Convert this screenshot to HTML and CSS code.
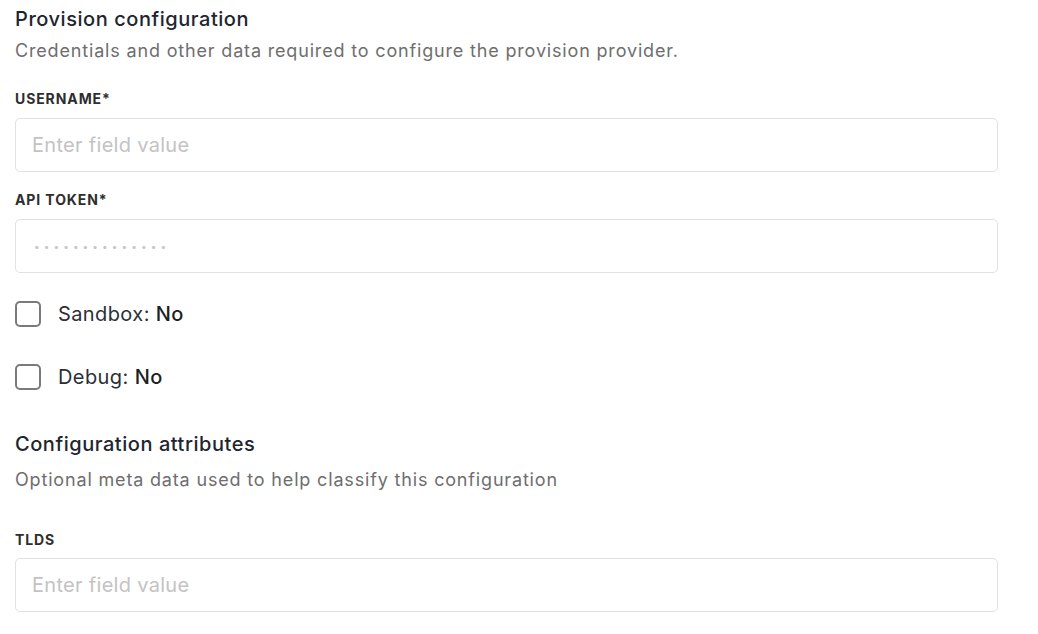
FILE: index.html
```html
<!DOCTYPE html>
<html lang="en">
<head>
<meta charset="utf-8">
<title>Provision configuration</title>
<link rel="stylesheet" href="styles.css">
</head>
<body>
<main class="page">
  <section class="section">
    <h2 class="section-title">Provision configuration</h2>
    <p class="section-desc">Credentials and other data required to configure the provision provider.</p>

    <div class="field field-first">
      <label class="field-label" for="username">Username*</label>
      <input class="field-input" id="username" type="text" placeholder="Enter field value">
    </div>

    <div class="field field-token">
      <label class="field-label" for="token">API Token*</label>
      <input class="field-input field-password" id="token" type="text" placeholder="••••••••••••••">
    </div>

    <label class="check check-first">
      <span class="check-box"></span>
      <span class="check-text">Sandbox: <strong class="check-value">No</strong></span>
    </label>

    <label class="check check-second">
      <span class="check-box"></span>
      <span class="check-text">Debug: <strong class="check-value">No</strong></span>
    </label>
  </section>

  <section class="section section-attrs">
    <h2 class="section-title">Configuration attributes</h2>
    <p class="section-desc section-desc-attrs">Optional meta data used to help classify this configuration</p>

    <div class="field field-tlds">
      <label class="field-label" for="tlds">TLDs</label>
      <input class="field-input field-input-last" id="tlds" type="text" placeholder="Enter field value">
    </div>
  </section>
</main>
</body>
</html>
```

FILE: styles.css
```css
* {
  box-sizing: border-box;
}

html, body {
  margin: 0;
  padding: 0;
  background: #ffffff;
}

body {
  font-family: Inter, "Noto Sans", "Liberation Sans", sans-serif;
  color: #222730;
}

.page {
  padding: 0 40px 0 15px;
  display: flex;
  flex-direction: column;
}

.section {
  display: flex;
  flex-direction: column;
}

.section-title {
  margin: 7px 0 0;
  font-size: 20px;
  line-height: 24px;
  font-weight: 450;
  letter-spacing: 0.55px;
  color: #1e2530;
}

.section-desc {
  margin: 9px 0 0;
  font-size: 18px;
  line-height: 22px;
  letter-spacing: 0.83px;
  color: #6e6e6e;
}

.field {
  display: flex;
  flex-direction: column;
  margin-top: 19px;
}

.field-first {
  margin-top: 29px;
}

.field-token {
  margin-top: 20px;
}

.field-label {
  font-size: 14px;
  line-height: 16px;
  font-weight: 700;
  text-transform: uppercase;
  letter-spacing: 0.9px;
  color: #2e2e2e;
  margin-bottom: 11px;
}

.field-input {
  height: 54px;
  width: 100%;
  border: 1px solid #e1e1e1;
  border-radius: 5px;
  padding: 0 16px;
  font-family: inherit;
  font-size: 20px;
  letter-spacing: 0.3px;
  color: #222;
  background: #fff;
  outline: none;
}

.field-input::placeholder {
  color: #c3c3c3;
}

.field-password {
  font-size: 10px;
  letter-spacing: 4.1px;
  padding-left: 18px;
}

.field-password::placeholder {
  color: #c6c6c6;
}

.check {
  display: flex;
  align-items: center;
  gap: 17px;
  height: 26px;
}

.check-first {
  margin-top: 28px;
}

.check-second {
  margin-top: 37px;
}

.check-box {
  width: 26px;
  height: 26px;
  border: 2px solid #7a7a7a;
  border-radius: 5px;
  flex: none;
}

.check-text {
  font-size: 20px;
  line-height: 24px;
  letter-spacing: 0.4px;
  color: #2b2f36;
}

.check-value {
  font-weight: 500;
  color: #1c1f24;
}

.section-attrs .section-title {
  margin-top: 42px;
}

.section-desc-attrs {
  margin-top: 13px;
}

.field-tlds {
  margin-top: 41px;
}

.field-tlds .field-label {
  margin-bottom: 10px;
}

.field-input-last {
  height: 54px;
}
```
